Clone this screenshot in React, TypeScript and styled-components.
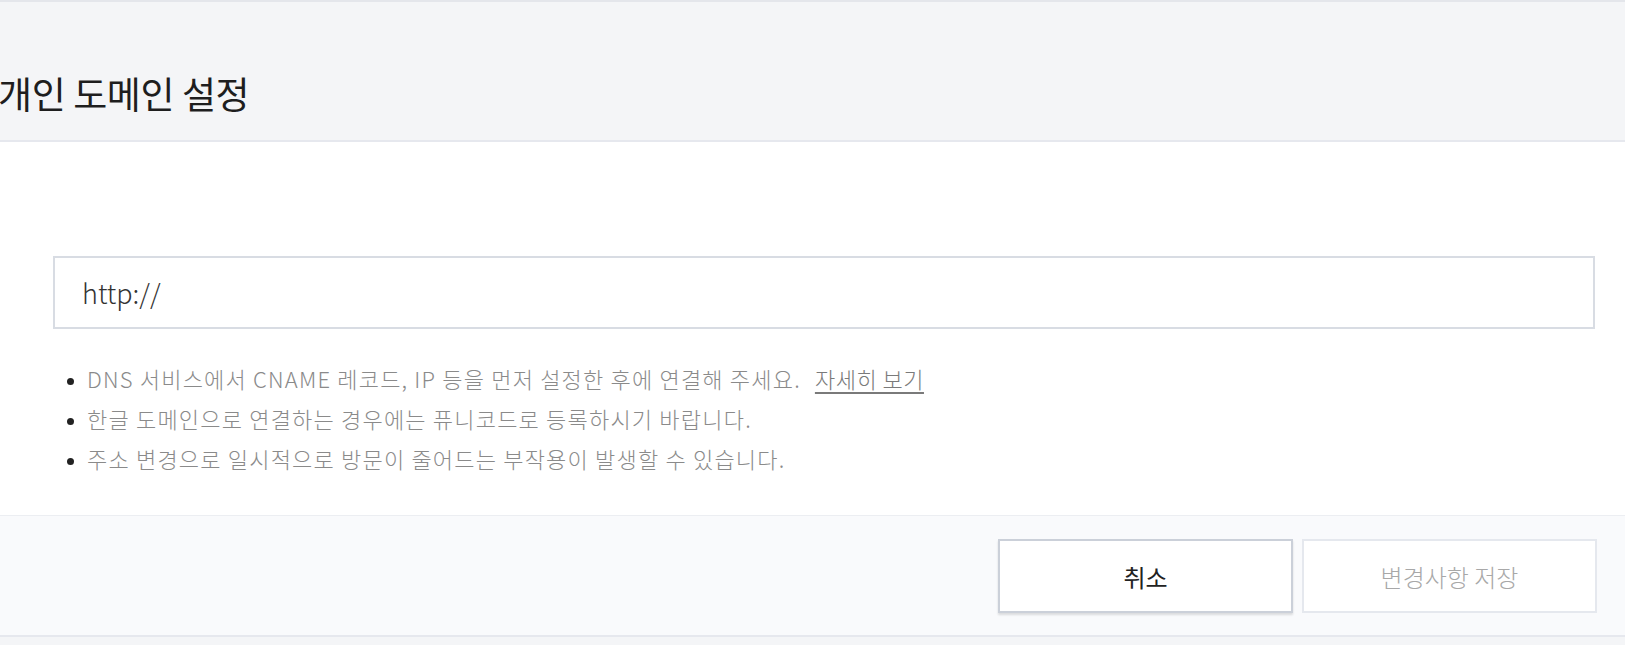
import React from "react"
import styled, { createGlobalStyle } from "styled-components"

const GlobalStyle = createGlobalStyle`
    html, body {
        margin: 0;
        padding: 0;
        background-color: #f4f5f7;
        font-family: "Noto Sans CJK KR", "Noto Sans", sans-serif;
    }
`

const notes = [
    { text: "DNS 서비스에서 CNAME 레코드, IP 등을 먼저 설정한 후에 연결해 주세요.", link: "자세히 보기" },
    { text: "한글 도메인으로 연결하는 경우에는 퓨니코드로 등록하시기 바랍니다." },
    { text: "주소 변경으로 일시적으로 방문이 줄어드는 부작용이 발생할 수 있습니다." },
]

const App = () => {
    return (
        <Page>
            <GlobalStyle />
            <Header>
                <Title>개인 도메인 설정</Title>
            </Header>
            <Body>
                <UrlInput type="text" defaultValue="http://" />
                <Notes>
                    {notes.map((n) => (
                        <Note key={n.text}>
                            {n.text}
                            {n.link && <MoreLink href="#">{n.link}</MoreLink>}
                        </Note>
                    ))}
                </Notes>
            </Body>
            <Footer>
                <Button>취소</Button>
                <Button disabled>변경사항 저장</Button>
            </Footer>
        </Page>
    )
}

export default App

const Page = styled.div`
    min-height: 645px;
    background-color: #f4f5f7;
    border-top: 2px solid #e4e6eb;
    box-sizing: border-box;
`

const Header = styled.div`
    height: 140px;
    box-sizing: border-box;
    padding-top: 63px;
    border-bottom: 2px solid #e6e8ee;
`

const Title = styled.h1`
    margin: 0 0 0 -2px;
    font-size: 37px;
    line-height: 56px;
    font-weight: 400;
    color: #1e1e1e;
    letter-spacing: -0.4px;
`

const Body = styled.div`
    background-color: #ffffff;
    padding: 114px 30px 37px 53px;
`

const UrlInput = styled.input`
    display: block;
    width: 100%;
    height: 73px;
    box-sizing: border-box;
    border: 2px solid #d8dce3;
    padding: 0 27px;
    font-family: inherit;
    font-size: 27px;
    font-weight: 300;
    color: #333;
    outline: none;
`

const Notes = styled.ul`
    margin: 29px 0 0;
    padding: 0 0 0 34px;
`

const Note = styled.li`
    font-size: 22px;
    line-height: 40px;
    font-weight: 300;
    color: #8a8a8a;
    letter-spacing: 1.2px;

    &::marker {
        color: #222;
        font-size: 17px;
    }
`

const MoreLink = styled.a`
    margin-left: 14px;
    color: #7a7a7a;
    letter-spacing: 0.5px;
    text-decoration: underline;
    text-underline-offset: 4px;
`

const Footer = styled.div`
    display: flex;
    justify-content: flex-end;
    gap: 9px;
    padding: 23px 28px 22px 0;
    background-color: #f9fafc;
    border-top: 1px solid #eceef2;
    border-bottom: 2px solid #e6e8ee;
`

const Button = styled.button`
    width: 295px;
    height: 74px;
    background-color: #ffffff;
    border: 2px solid ${(p) => (p.disabled ? "#e5e8ee" : "#cbd0d9")};
    box-shadow: ${(p) => (p.disabled ? "none" : "0 2px 2px rgba(0, 0, 0, 0.12)")};
    font-family: inherit;
    font-size: 24px;
    font-weight: ${(p) => (p.disabled ? 300 : 400)};
    color: ${(p) => (p.disabled ? "#a8a8a8" : "#222222")};
    cursor: ${(p) => (p.disabled ? "default" : "pointer")};
`
